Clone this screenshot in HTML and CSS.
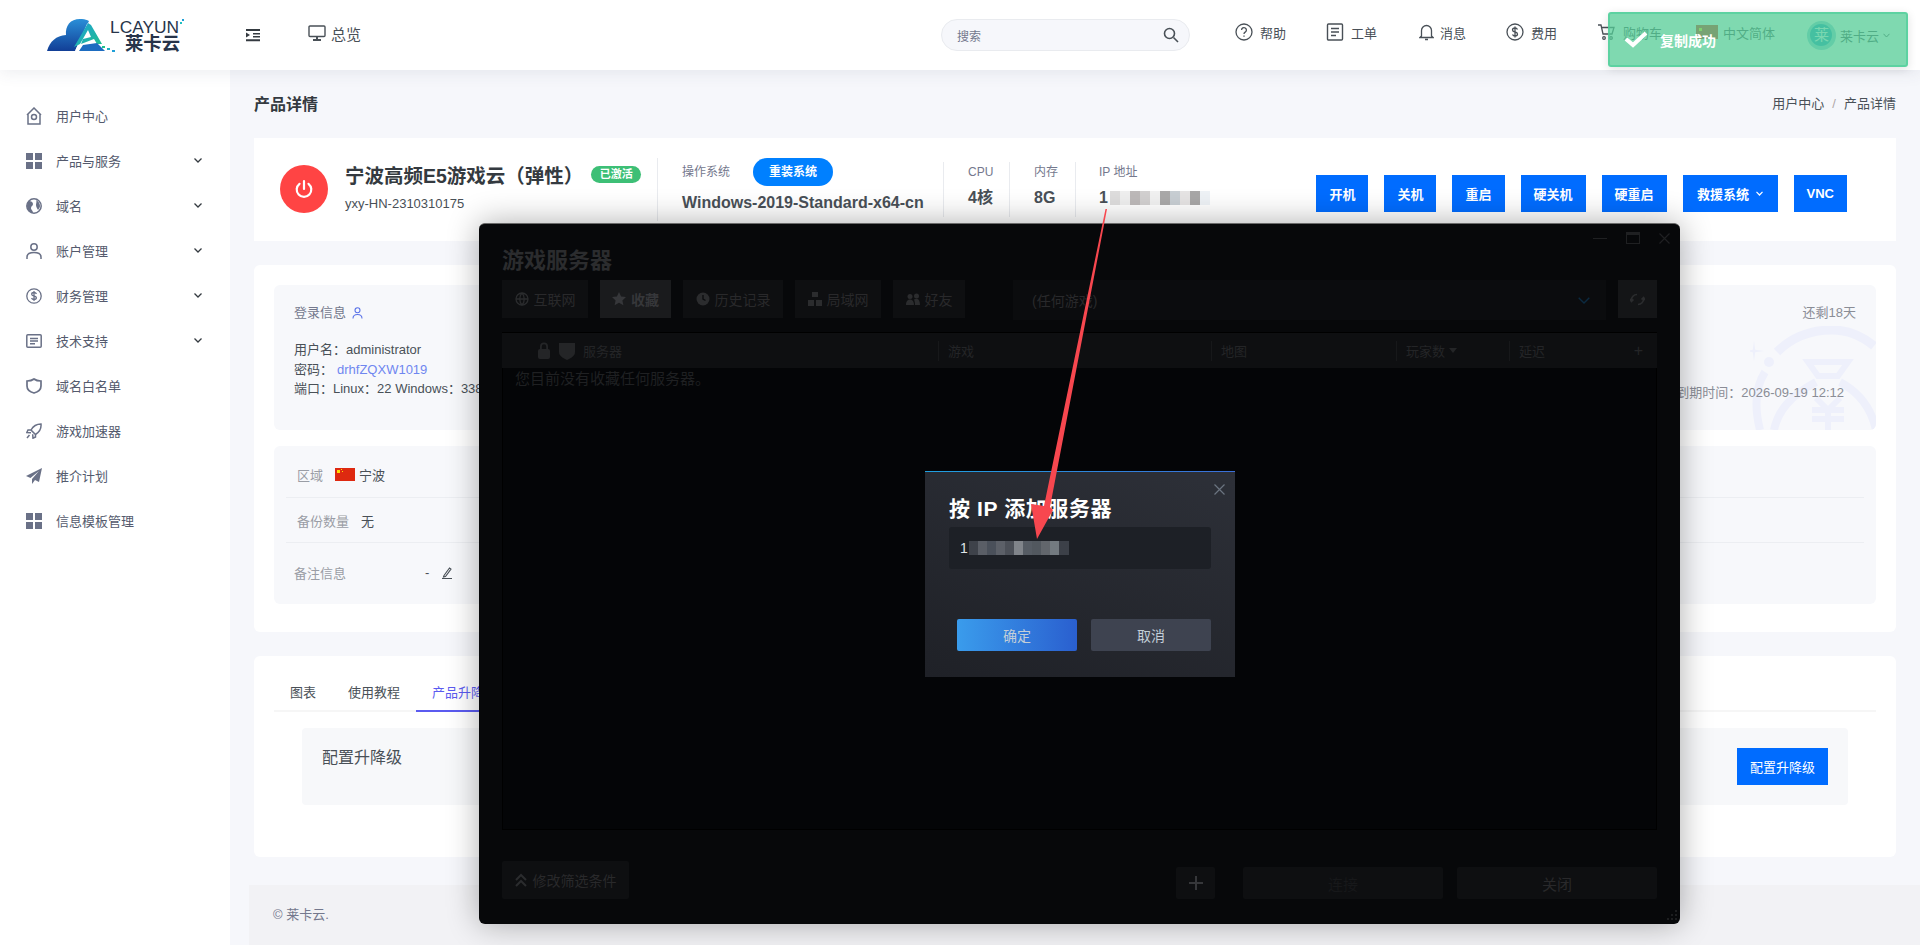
FILE: index.html
```html
<!DOCTYPE html>
<html lang="zh-CN">
<head>
    <meta charset="UTF-8">
    <meta name="viewport" content="width=device-width, initial-scale=1.0">
    <title>产品详情</title>
    <link rel="stylesheet" href="styles.css">
</head>
<body>

    <header class="topbar">
        <svg class="logo" width="137" height="36" viewBox="0 0 137 36">
            <defs>
                <linearGradient id="cloud" x1="0" y1="0" x2="0" y2="1"><stop offset="0" stop-color="#2a8fd8"/><stop offset="1" stop-color="#123e96"/></linearGradient>
                <linearGradient id="letterA" x1="0" y1="0" x2="1" y2="1"><stop offset="0" stop-color="#1fa0d8"/><stop offset="1" stop-color="#1fc08a"/></linearGradient>
            </defs>
            <path d="M0 34 C3 24 9 19 19 18 C18 8 24 1 35 2 C38 2 40 3 42 4 L28 34 Z" fill="url(#cloud)"/>
            <path d="M28 34 L40 7 C43 4 46 5 48 9 L60 34 L51 28 L44 14 L36 29 Z" fill="#fff"/>
            <path d="M27 30 L41 6 L44 8 L55 27 L50 27 L47 22 L34 27 L36 22 L44 20 L41 13 L33 27 Z" fill="url(#letterA)"/>
            <path d="M32 34 L58 34 L50 26 L36 28 Z" fill="#1d6cc0"/>
            <rect x="55" y="29" width="3" height="2" fill="#1fc08a"/><rect x="60" y="31" width="3" height="2" fill="#1fb0c0"/><rect x="65" y="33" width="3" height="2" fill="#1fa0d8"/>
            <rect x="133" y="5" width="2" height="2" fill="#1fc0c0"/><rect x="135" y="2" width="2" height="2" fill="#1fa0d8"/>
            <text class="logo-en" x="63" y="16" textLength="69" lengthAdjust="spacingAndGlyphs">LCAYUN</text>
            <text class="logo-cn" x="78" y="33" textLength="55" lengthAdjust="spacingAndGlyphs">莱卡云</text>
        </svg>
        <svg class="menu-toggle" width="14" height="14" viewBox="0 0 14 14"><path d="M0 1h14v2H0zM7 5h7v1.6H7zM7 8h7v1.6H7zM0 11.2h14v2H0zM0 4.4l4 2.6-4 2.6z" fill="#343a40"/></svg>
        <a class="overview">
            <svg width="18" height="18" viewBox="0 0 18 18" fill="none" stroke="#495057" stroke-width="1.4"><rect x="1" y="2" width="16" height="10.5" rx="1"/><path d="M9 12.5v3M5 16h8" stroke-width="2"/></svg>
            <span>总览</span>
        </a>

        <div class="search">
            <span>搜索</span>
            <svg width="16" height="16" viewBox="0 0 16 16" fill="none" stroke="#495057" stroke-width="1.6"><circle cx="6.5" cy="6.5" r="5"/><path d="M10.5 10.5L15 15"/></svg>
        </div>

        <a class="nav-item nav-help">
            <svg width="18" height="18" viewBox="0 0 18 18" fill="none" stroke="#495057" stroke-width="1.3"><circle cx="9" cy="9" r="8"/><path d="M6.6 7a2.4 2.4 0 1 1 3.6 2.1c-.8.5-1.2 1-1.2 1.9M9 12.4v1.4"/></svg>
            <span>帮助</span>
        </a>
        <a class="nav-item">
            <svg width="18" height="18" viewBox="0 0 18 18" fill="none" stroke="#495057" stroke-width="1.4"><rect x="1.5" y="1" width="15" height="16" rx="1"/><path d="M5 5.5h8M5 9h8M5 12.5h5"/></svg>
            <span>工单</span>
        </a>
        <a class="nav-item nav-bell">
            <svg width="15" height="18" viewBox="0 0 15 18" fill="none" stroke="#495057" stroke-width="1.3"><path d="M2.5 13V7.5a5 5 0 0 1 10 0V13l1.5 1.5H1zM6 16.5h3"/></svg>
            <span>消息</span>
        </a>
        <a class="nav-item">
            <svg width="18" height="18" viewBox="0 0 18 18" fill="none" stroke="#495057" stroke-width="1.3"><circle cx="9" cy="9" r="8"/><path d="M11.5 6.5C11 5.500 10 5 9 5c-1.500 0-2.500.8-2.500 2s1 1.700 2.500 2 2.500.8 2.500 2-1 2-2.500 2c-1 0-2-.5-2.500-1.500M9 3.500v11"/></svg>
            <span>费用</span>
        </a>
        <a class="nav-item">
            <svg width="19" height="18" viewBox="0 0 19 18" fill="none" stroke="#495057" stroke-width="1.3"><path d="M1 2h3l2 9h9l2-6.500H5"/><circle cx="7" cy="15" r="1.300"/><circle cx="14" cy="15" r="1.300"/></svg>
            <span>购物车</span>
        </a>
        <a class="nav-item nav-lang">
            <svg width="22" height="14" viewBox="0 0 22 14"><rect width="22" height="14" fill="#de2910"/><rect x="3" y="3" width="3" height="3" fill="#ffde00"/></svg>
            <span>中文简体</span>
        </a>
        <a class="nav-item nav-user">
            <span class="avatar"><span>莱</span></span>
            <span>莱卡云</span>
            <svg width="7" height="5" viewBox="0 0 7 5" fill="none" stroke="#495057"><path d="M.5.800L3.500 4 6.500.800"/></svg>
        </a>
    </header>

    <div class="page">
        <aside class="sidebar">
            <a class="side-item">
                <svg width="16" height="18" viewBox="0 0 16 18" fill="none" stroke="#6a7187" stroke-width="1.500"><path d="M1 8l7-7 7 7M2 7v10h12V7"/><circle cx="8" cy="10" r="2.500"/></svg>
                <span>用户中心</span>
            </a>
            <a class="side-item has-sub">
                <svg width="16" height="16" viewBox="0 0 16 16" fill="#6a7187"><rect width="7" height="7"/><rect x="9" width="7" height="7"/><rect y="9" width="7" height="7"/><rect x="9" y="9" width="7" height="7"/></svg>
                <span>产品与服务</span>
                <svg class="chevron" width="8" height="5" viewBox="0 0 8 5" fill="none" stroke="#343a40" stroke-width="1.300"><path d="M.5.500L4 4 7.500.500"/></svg>
            </a>
            <a class="side-item has-sub">
                <svg width="16" height="16" viewBox="0 0 16 16"><circle cx="8" cy="8" r="7.200" fill="none" stroke="#6a7187" stroke-width="1.500"/><path d="M3 3c2 0 4 1 4 3S5 8 5 10s2 2 2 5C3 14 1 11 1 8s1-4 2-5zM10 2c2 1 4 3 4 6 0 1-1 3-2 4-1-2-2-3-2-5s1-3 0-5z" fill="#6a7187"/></svg>
                <span>域名</span>
                <svg class="chevron" width="8" height="5" viewBox="0 0 8 5" fill="none" stroke="#343a40" stroke-width="1.300"><path d="M.5.500L4 4 7.500.500"/></svg>
            </a>
            <a class="side-item has-sub">
                <svg width="16" height="16" viewBox="0 0 16 16" fill="none" stroke="#6a7187" stroke-width="1.500"><circle cx="8" cy="4" r="3.200"/><path d="M1 16v-2c0-3 3-4.500 7-4.500s7 1.500 7 4.500v2"/></svg>
                <span>账户管理</span>
                <svg class="chevron" width="8" height="5" viewBox="0 0 8 5" fill="none" stroke="#343a40" stroke-width="1.300"><path d="M.5.500L4 4 7.500.500"/></svg>
            </a>
            <a class="side-item has-sub">
                <svg width="16" height="16" viewBox="0 0 16 16" fill="none" stroke="#6a7187" stroke-width="1.300"><circle cx="8" cy="8" r="7.200"/><path d="M10.500 5.800C10 5 9 4.500 8 4.500c-1.400 0-2.300.7-2.300 1.700S6.700 7.700 8 8s2.400.8 2.400 1.800S9.400 11.500 8 11.500c-1 0-2-.5-2.500-1.300M8 3v10"/></svg>
                <span>财务管理</span>
                <svg class="chevron" width="8" height="5" viewBox="0 0 8 5" fill="none" stroke="#343a40" stroke-width="1.300"><path d="M.5.500L4 4 7.500.500"/></svg>
            </a>
            <a class="side-item has-sub">
                <svg width="16" height="16" viewBox="0 0 16 16" fill="none" stroke="#6a7187" stroke-width="1.500"><rect x=".8" y="1.800" width="14.400" height="12.400" rx="1"/><path d="M4 5.500h8M4 8h8M4 10.800h5"/></svg>
                <span>技术支持</span>
                <svg class="chevron" width="8" height="5" viewBox="0 0 8 5" fill="none" stroke="#343a40" stroke-width="1.300"><path d="M.5.500L4 4 7.500.500"/></svg>
            </a>
            <a class="side-item">
                <svg width="16" height="16" viewBox="0 0 16 16" fill="none" stroke="#6a7187" stroke-width="1.700"><path d="M8 1c2 1.500 4 2 7 2v5c0 4-3 6-7 7-4-1-7-3-7-7V3c3 0 5-.5 7-2z"/></svg>
                <span>域名白名单</span>
            </a>
            <a class="side-item">
                <svg width="16" height="16" viewBox="0 0 16 16" fill="none" stroke="#6a7187" stroke-width="1.500"><path d="M15 1c.5 5-1.500 8-5.500 10.500L5 7c2.500-4.500 5.500-6 10-6zM5 7H2L.8 9.500 5 9.800M9.500 11.500V14l-2.500 1.200-.3-4M3.500 12L1 15"/></svg>
                <span>游戏加速器</span>
            </a>
            <a class="side-item">
                <svg width="16" height="16" viewBox="0 0 16 16"><path d="M16 0L0 8l4.500 2L13 3l-7 8v5l3-4 4 2z" fill="#6a7187"/></svg>
                <span>推介计划</span>
            </a>
            <a class="side-item">
                <svg width="16" height="16" viewBox="0 0 16 16" fill="#6a7187"><rect width="7" height="7"/><rect x="9" width="7" height="7"/><rect y="9" width="7" height="7"/><rect x="9" y="9" width="7" height="7"/></svg>
                <span>信息模板管理</span>
            </a>
        </aside>

        <main class="main">
            <div class="content">
                <div class="page-head">
                    <h4>产品详情</h4>
                    <div class="crumbs">用户中心<span class="crumb-sep">/</span>产品详情</div>
                </div>

                <section class="card summary">
                    <div class="power">
                        <svg width="20" height="20" viewBox="0 0 20 20" fill="none" stroke="#fff" stroke-width="2.200" stroke-linecap="round"><path d="M10 2v8M5.500 4.800a7.300 7.300 0 1 0 9 0"/></svg>
                    </div>
                    <div class="summary-name">
                        <div class="name-line"><strong>宁波高频E5游戏云（弹性）</strong><span class="badge">已激活</span></div>
                        <div class="name-code">yxy-HN-2310310175</div>
                    </div>
                    <div class="spec spec-os">
                        <div class="os-top"><span class="spec-label">操作系统</span><a class="pill">重装系统</a></div>
                        <div class="os-name">Windows-2019-Standard-x64-cn</div>
                    </div>
                    <div class="spec spec-small">
                        <div class="spec-label">CPU</div>
                        <div class="spec-value">4核</div>
                    </div>
                    <div class="spec spec-small">
                        <div class="spec-label">内存</div>
                        <div class="spec-value">8G</div>
                    </div>
                    <div class="spec spec-ip">
                        <div class="spec-label">IP 地址</div>
                        <div class="spec-value ip-value">1
                            <svg width="100" height="14" viewBox="0 0 100 14"><rect width="10" height="14" fill="#dedddd"/><rect x="10" width="10" height="14" fill="#efefef"/><rect x="20" width="10" height="14" fill="#bdb9b9"/><rect x="30" width="10" height="14" fill="#d2d0d0"/><rect x="40" width="10" height="14" fill="#f1f1f1"/><rect x="50" width="10" height="14" fill="#aaa9a9"/><rect x="60" width="10" height="14" fill="#c8ced3"/><rect x="70" width="10" height="14" fill="#e6e4e4"/><rect x="80" width="10" height="14" fill="#a8a7a7"/><rect x="90" width="10" height="14" fill="#eef2f6"/></svg>
                        </div>
                    </div>
                    <div class="actions">
                        <a class="btn">开机</a>
                        <a class="btn">关机</a>
                        <a class="btn">重启</a>
                        <a class="btn">硬关机</a>
                        <a class="btn">硬重启</a>
                        <a class="btn btn-rescue">救援系统<svg width="7" height="5" viewBox="0 0 7 5" fill="none" stroke="#fff" stroke-width="1.200"><path d="M.5.800L3.500 4 6.500.800"/></svg></a>
                        <a class="btn">VNC</a>
                    </div>
                </section>

                <section class="card detail">
                    <div class="panel login-panel">
                        <svg class="watermark" width="126" height="104" viewBox="0 0 126 104" fill="none" stroke="#eef0fb" stroke-width="9">
                            <path d="M27 26C45 8 65 4 82 4c16 0 30 6 42 16"/>
                            <path d="M10 104C4 80 6 60 15 46" stroke-width="8"/>
                            <circle cx="19" cy="36" r="5" fill="#eef0fb" stroke="none"/>
                            <path d="M3 15l1.200 8.800L13 25l-8.800 1.200L3 35l-1.200-8.800L-7 25l8.800-1.200z" transform="translate(1 0)" fill="#eef0fb" stroke="none"/>
                            <path d="M58 36h40l-10 14H68z" stroke-width="6"/>
                            <path d="M66 56C40 70 28 85 24 104M90 56c22 12 32 29 36 48" stroke-width="8"/>
                            <path d="M66 72l12 12 12-12M62 84h32M62 93h32M78 84v20" stroke-width="6"/>
                        </svg>
                        <div class="login-info">
                            <div class="login-title">登录信息
                                <svg width="11" height="12" viewBox="0 0 11 12" fill="none" stroke="#5b73e8" stroke-width="1.100"><circle cx="5.500" cy="3.300" r="2.500"/><path d="M1 11.500c0-3 2-4 4.500-4s4.500 1 4.500 4"/></svg>
                            </div>
                            <div class="login-lines">
                                <div>用户名：administrator</div>
                                <div>密码：<a class="pwd">drhfZQXW1019</a></div>
                                <div class="nowrap">端口：Linux：22 Windows：3389</div>
                            </div>
                        </div>
                        <div class="expire">
                            <div>还剩18天</div>
                            <div class="expire-date">到期时间：2026-09-19 12:12</div>
                        </div>
                    </div>

                    <div class="panel info-panel">
                        <div class="info-row row-area">
                            <span class="info-label">区域</span>
                            <svg class="flag" width="20" height="13" viewBox="0 0 20 13"><rect width="20" height="13" fill="#de2910"/><rect x="2" y="2" width="3" height="3" fill="#ffde00"/><rect x="6" y="1" width="1" height="1" fill="#ffde00"/><rect x="7" y="3" width="1" height="1" fill="#ffde00"/></svg>
                            <span>宁波</span>
                        </div>
                        <div class="info-row">
                            <span class="info-label">备份数量</span>
                            <span class="info-val">无</span>
                        </div>
                        <div class="info-row row-note">
                            <span class="info-label">备注信息</span>
                            <span class="note-val">-</span>
                            <svg width="10" height="12" viewBox="0 0 10 12" fill="none" stroke="#495057" stroke-width="1.100"><path d="M2 8.500L7.500 1 9 2.200 3.500 9.500 1.500 10zM0 11.500h10"/></svg>
                        </div>
                    </div>
                </section>

                <section class="card upgrade">
                    <div class="tabs">
                        <a class="tab">图表</a>
                        <a class="tab">使用教程</a>
                        <a class="tab tab-active">产品升降级</a>
                    </div>
                    <div class="upgrade-box">
                        <div class="upgrade-title">配置升降级</div>
                        <a class="btn btn-upgrade">配置升降级</a>
                    </div>
                </section>
            </div>
            <footer class="footer">© 莱卡云.</footer>
        </main>
    </div>

    <div class="game-win">
        <div class="win-controls">
            <span class="win-min"></span>
            <span class="win-max"></span>
            <svg width="11" height="11" viewBox="0 0 11 11" stroke="#1f2022" stroke-width="1.200"><path d="M.5.500l10 10M10.500.500l-10 10"/></svg>
        </div>
        <div class="win-title">游戏服务器</div>
        <div class="win-tabs">
            <a class="win-tab"><svg width="14" height="14" viewBox="0 0 14 14" fill="none" stroke="#2b2c2e" stroke-width="1.300"><circle cx="7" cy="7" r="6"/><path d="M1 7h12M7 1c-3 3-3 9 0 12M7 1c3 3 3 9 0 12"/></svg>互联网</a>
            <a class="win-tab win-tab-on"><svg width="14" height="14" viewBox="0 0 14 14" fill="#36373a"><path d="M7 0l2.100 4.500 4.900.6-3.600 3.300 1 4.800L7 10.800 2.600 13.200l1-4.800L0 5.100l4.900-.6z"/></svg>收藏</a>
            <a class="win-tab"><svg width="14" height="14" viewBox="0 0 14 14"><circle cx="7" cy="7" r="6.500" fill="#2b2c2e"/><path d="M7 3v4l2.500 1.500" fill="none" stroke="#0d0e10" stroke-width="1.400"/></svg>历史记录</a>
            <a class="win-tab"><svg width="14" height="14" viewBox="0 0 14 14" fill="#2b2c2e"><rect x="4" y="0" width="6" height="5"/><rect x="0" y="8" width="6" height="6"/><rect x="8" y="8" width="6" height="6"/></svg>局域网</a>
            <a class="win-tab"><svg width="14" height="14" viewBox="0 0 14 14" fill="#2b2c2e"><circle cx="4" cy="4.500" r="2.500"/><circle cx="10.500" cy="4" r="2.500"/><path d="M0 13c0-4 2-5.500 4-5.500S8 9 8 13zM9 13c0-3-.5-4-1-5.500 1-.5 1.500-.7 2.500-.7 2 0 3.500 2 3.500 6.200z"/></svg>好友</a>
            <div class="win-select">
                <span>(任何游戏)</span>
                <svg width="12" height="7" viewBox="0 0 12 7" fill="none" stroke="#0b2a40" stroke-width="1.400"><path d="M.7.700L6 6 11.300.7"/></svg>
            </div>
            <a class="win-refresh"><svg width="15" height="13" viewBox="0 0 15 13" fill="none" stroke="#2b2c2e" stroke-width="1.700"><path d="M1.500 8C1 4 4 1.500 7 1.500M13.500 5C14 9 11 11.500 8 11.500M0 6l1.500 2.500L3.500 6.500M15 7l-1.500-2.500L11.500 6.500"/></svg></a>
        </div>
        <div class="win-table">
            <div class="win-thead">
                <div class="col col-server">
                    <svg width="14" height="17" viewBox="0 0 14 17" fill="#242527"><path d="M3 7V4.500a4 4 0 0 1 8 0V7h-1.800V4.500a2.200 2.200 0 0 0-4.400 0V7z"/><rect x="1" y="7" width="12" height="10" rx="2"/></svg>
                    <svg width="16" height="18" viewBox="0 0 16 18" fill="#242527"><path d="M0 1h16v9c0 4-4 6-8 8-4-2-8-4-8-8z"/></svg>
                    <span>服务器</span>
                </div>
                <div class="col col-game">游戏</div>
                <div class="col col-map">地图</div>
                <div class="col col-players">玩家数<svg width="8" height="5" viewBox="0 0 8 5" fill="#242527"><path d="M0 0h8L4 5z"/></svg></div>
                <div class="col col-ping">延迟<span class="col-plus">+</span></div>
            </div>
            <div class="win-tbody">您目前没有收藏任何服务器。</div>
        </div>
        <div class="win-bottom">
            <a class="win-btn win-filter"><svg width="12" height="14" viewBox="0 0 12 14" fill="none" stroke="#2b2c2e" stroke-width="2"><path d="M1 7l5-5 5 5M1 13l5-5 5 5"/></svg>修改筛选条件</a>
            <a class="win-btn win-plus"><svg width="14" height="14" viewBox="0 0 14 14" stroke="#36373a" stroke-width="2"><path d="M7 0v14M0 7h14"/></svg></a>
            <a class="win-btn win-connect">连接</a>
            <a class="win-btn win-close">关闭</a>
        </div>
        <svg class="win-grip" width="12" height="12" viewBox="0 0 12 12" fill="#1d1e20"><rect x="9" y="0" width="2" height="2"/><rect x="5" y="4" width="2" height="2"/><rect x="9" y="4" width="2" height="2"/><rect x="1" y="8" width="2" height="2"/><rect x="5" y="8" width="2" height="2"/><rect x="9" y="8" width="2" height="2"/></svg>
    </div>

    <div class="ip-dialog">
        <svg class="ip-close" width="11" height="11" viewBox="0 0 11 11" stroke="#6b7480" stroke-width="1.200"><path d="M.5.500l10 10M10.500.500l-10 10"/></svg>
        <div class="ip-title">按 IP 添加服务器</div>
        <div class="ip-input">1
            <svg width="100" height="14" viewBox="0 0 100 14"><rect width="9" height="14" fill="#3e424a"/><rect x="9" width="9" height="14" fill="#5a5e66"/><rect x="18" width="9" height="14" fill="#4a505a"/><rect x="27" width="9" height="14" fill="#5c6068"/><rect x="36" width="9" height="14" fill="#4c5058"/><rect x="45" width="9" height="14" fill="#80848a"/><rect x="54" width="9" height="14" fill="#565c64"/><rect x="63" width="9" height="14" fill="#52585f"/><rect x="72" width="9" height="14" fill="#62666c"/><rect x="81" width="9" height="14" fill="#737a80"/><rect x="90" width="10" height="14" fill="#3c4048"/></svg>
        </div>
        <div class="ip-buttons">
            <a class="ip-btn ip-ok">确定</a>
            <a class="ip-btn ip-cancel">取消</a>
        </div>
    </div>

    <svg class="arrow" width="1920" height="945" viewBox="0 0 1920 945"><polygon points="1105.500,209 1107,209 1050,507 1053,510 1037,539 1031,504 1044,506" fill="#f7474f"/></svg>

    <div class="toast">
        <svg width="24" height="17" viewBox="0 0 24 17" fill="none" stroke="#fff" stroke-width="4"><path d="M2 8l7 6L22 2"/></svg>
        <span>复制成功</span>
    </div>

</body>
</html>
```

FILE: styles.css
```css
* {
    box-sizing: border-box;
}

html, body {
    margin: 0;
    height: 945px;
    overflow: hidden;
}

body {
    position: relative;
    font-family: "Liberation Sans", "Noto Sans CJK SC", sans-serif;
    font-size: 13px;
    color: #495057;
    background-color: #f6f7fb;
}

/* top bar */

.topbar {
    position: relative;
    z-index: 2;
    display: flex;
    align-items: center;
    height: 70px;
    padding-left: 47px;
    background-color: #fff;
    box-shadow: 0 2px 16px rgba(60, 70, 100, 0.1);
}

.logo {
    flex: none;
}

.logo-en {
    font-size: 16px;
    fill: #27344a;
}

.logo-cn {
    font-size: 18px;
    font-weight: bold;
    fill: #27344a;
}

.menu-toggle {
    margin-left: 62px;
}

.overview {
    display: flex;
    align-items: center;
    gap: 5px;
    margin-left: 48px;
    font-size: 15px;
    padding-bottom: 4px;
}

.search {
    display: flex;
    align-items: center;
    justify-content: space-between;
    width: 249px;
    height: 32px;
    margin-left: auto;
    padding: 0 10px 0 15px;
    font-size: 12px;
    color: #74788d;
    background-color: #f6f7fb;
    border: 1px solid #e9ebef;
    border-radius: 16px;
}

.nav-item {
    display: flex;
    align-items: center;
    gap: 7px;
    margin-left: 40px;
    padding-bottom: 6px;
    font-size: 13px;
}

.nav-help {
    margin-left: 45px;
}

.nav-bell {
    margin-left: 42px;
    gap: 6px;
}

.nav-lang {
    margin-left: 34px;
    gap: 5px;
}

.nav-user {
    margin-left: 32px;
    margin-right: 30px;
    gap: 4px;
    padding-bottom: 0;
}

.avatar {
    display: flex;
    align-items: center;
    justify-content: center;
    width: 29px;
    height: 29px;
    border-radius: 50%;
    background-color: #8fd0dc;
}

.avatar span {
    display: block;
    width: 22px;
    height: 22px;
    line-height: 22px;
    text-align: center;
    font-size: 15px;
    color: #e8f8ff;
    border-radius: 50%;
    background-color: #1b9cc4;
}

/* sidebar */

.page {
    display: flex;
    height: 875px;
}

.sidebar {
    flex: none;
    width: 230px;
    padding-top: 23px;
    background-color: #fff;
}

.side-item {
    display: flex;
    align-items: center;
    height: 45px;
    padding-left: 26px;
    color: #545a6d;
}

.side-item > span {
    margin-left: 14px;
}

.chevron {
    margin-left: auto;
    margin-right: 28px;
}

/* main */

.main {
    flex: 1;
    display: flex;
    flex-direction: column;
    min-width: 0;
}

.content {
    height: 815px;
    padding: 0 24px;
}

.page-head {
    display: flex;
    justify-content: space-between;
    align-items: center;
    height: 68px;
    padding-bottom: 3px;
}

.page-head h4 {
    margin: 0;
    font-size: 16px;
    font-weight: bold;
    color: #343a40;
}

.crumbs {
    color: #495057;
}

.crumb-sep {
    margin: 0 8px;
    color: #b0a8a8;
}

.card {
    background-color: #fff;
    margin-bottom: 24px;
}

.summary {
    display: flex;
    align-items: center;
    height: 103px;
    padding-left: 26px;
}

.power {
    flex: none;
    display: flex;
    align-items: center;
    justify-content: center;
    width: 48px;
    height: 48px;
    margin-bottom: 2px;
    background-color: #ff4444;
    border-radius: 50%;
}

.summary-name {
    flex: none;
    width: 312px;
    margin-left: 17px;
    padding-bottom: 4px;
}

.name-line {
    display: flex;
    align-items: center;
    height: 26px;
}

.name-line strong {
    font-size: 19.5px;
    color: #343a40;
    white-space: nowrap;
}

.badge {
    margin-left: 8px;
    width: 50px;
    height: 17px;
    line-height: 17px;
    text-align: center;
    font-size: 11px;
    font-weight: bold;
    color: #fff;
    background-color: #3dbf76;
    border-radius: 9px;
}

.name-code {
    margin-top: 6px;
    line-height: 20px;
    color: #495057;
}

.spec {
    flex: none;
    height: 55px;
    padding-left: 24px;
    border-left: 1px solid #e9ebef;
}

.spec-os {
    width: 286px;
    height: 63px;
}

.spec-small {
    width: 66px;
}

.spec-ip {
    width: 160px;
    padding-left: 23px;
}

.spec-label {
    line-height: 20px;
    font-size: 12px;
    color: #74788d;
}

.os-top {
    display: flex;
    align-items: center;
    justify-content: space-between;
    width: 151px;
}

.pill {
    width: 80px;
    height: 28px;
    line-height: 28px;
    text-align: center;
    font-size: 12px;
    font-weight: bold;
    color: #fff;
    background-color: #0080ff;
    border-radius: 14px;
}

.os-name {
    margin-top: 3px;
    line-height: 28px;
    font-size: 16px;
    font-weight: bold;
    color: #495057;
    white-space: nowrap;
}

.spec-value {
    margin-top: 6px;
    line-height: 20px;
    font-size: 16px;
    font-weight: bold;
    color: #495057;
}

.ip-value {
    display: flex;
    align-items: center;
    gap: 2px;
}

.actions {
    display: flex;
    gap: 16px;
    margin-top: 8px;
    margin-left: auto;
    padding-right: 49px;
}

.btn {
    display: flex;
    align-items: center;
    justify-content: center;
    gap: 7px;
    height: 37px;
    padding: 0 13px;
    font-size: 13px;
    font-weight: bold;
    color: #fff;
    white-space: nowrap;
    background-color: #006cff;
}

.btn-rescue {
    padding: 0 14.5px;
}

.detail {
    height: 367px;
    padding: 20px;
    border-radius: 6px;
}

.panel {
    background-color: #f7f8fb;
    border-radius: 6px;
}

.login-panel {
    position: relative;
    display: flex;
    justify-content: space-between;
    height: 145px;
    padding: 18px 20px 0;
    overflow: hidden;
    margin-bottom: 16px;
}

.watermark {
    position: absolute;
    right: 0;
    bottom: 0;
}

.login-info, .expire {
    position: relative;
}

.login-title {
    display: flex;
    align-items: center;
    gap: 6px;
    line-height: 20px;
    color: #74788d;
}

.login-lines {
    margin-top: 17px;
    line-height: 19.5px;
    color: #495057;
}

.pwd {
    margin-left: 4px;
    color: #6f86f0;
}

.nowrap {
    white-space: nowrap;
}

.expire {
    text-align: right;
    line-height: 20px;
    color: #8a8d96;
}

.expire-date {
    margin-top: 60px;
    margin-right: 12px;
}

.info-panel {
    height: 158px;
    padding: 0 12px;
}

.info-row {
    display: flex;
    align-items: center;
    height: 45px;
    padding-left: 11px;
    border-bottom: 1px solid #eceef2;
}

.row-area {
    height: 52px;
    padding-top: 6px;
}

.row-note {
    height: 61px;
    padding-left: 8px;
    padding-bottom: 2px;
    border-bottom: none;
}

.info-label {
    color: #9a9da5;
}

.flag {
    margin-left: 12px;
    margin-right: 4px;
}

.info-val {
    margin-left: 12px;
}

.note-val {
    margin-left: 79px;
    margin-right: 13px;
}

.upgrade {
    height: 201px;
    margin-bottom: 0;
    padding-top: 20px;
    border-radius: 6px;
}

.tabs {
    display: flex;
    height: 36px;
    margin: 0 20px;
    border-bottom: 2px solid #f6f6f6;
}

.tab {
    height: 36px;
    line-height: 34px;
    padding: 0 16px;
    border-bottom: 2px solid transparent;
}

.tab-active {
    color: #5b5bf0;
    border-bottom-color: #5b5bf0;
}

.upgrade-box {
    display: flex;
    justify-content: space-between;
    align-items: flex-start;
    height: 77px;
    margin: 16px 48px 0;
    padding: 0 20px;
    background-color: #f7f8fa;
    border-radius: 4px;
}

.upgrade-title {
    margin-top: 18px;
    line-height: 24px;
    font-size: 16px;
    color: #495057;
}

.btn-upgrade {
    margin-top: 20px;
    width: 91px;
    padding: 0;
    font-size: 13px;
    font-weight: normal;
}

.footer {
    height: 60px;
    margin-left: 19px;
    padding-left: 24px;
    line-height: 60px;
    color: #74788d;
    background-color: #f2f2f5;
}

/* steam window */

.game-win {
    position: absolute;
    z-index: 3;
    left: 479px;
    top: 223px;
    display: flex;
    flex-direction: column;
    width: 1201px;
    height: 701px;
    padding: 22px 23px 0;
    color: #29292b;
    background-color: #07080a;
    border-radius: 6px;
    border-top: 1px solid #6a6a6a;
    box-shadow: 0 0 32px rgba(0, 0, 0, 0.32);
}

.win-controls {
    position: absolute;
    top: 8px;
    right: 10px;
    display: flex;
    align-items: center;
    gap: 19px;
}

.win-min {
    width: 14px;
    height: 1px;
    background-color: #1f2022;
}

.win-max {
    width: 14px;
    height: 12px;
    border: 1px solid #1f2022;
    border-top-width: 3px;
}

.win-title {
    line-height: 30px;
    font-size: 22px;
    font-weight: bold;
    color: #2b2c2e;
}

.win-tabs {
    display: flex;
    gap: 12px;
    margin-top: 4px;
}

.win-tab {
    display: flex;
    align-items: center;
    gap: 5px;
    height: 38px;
    padding: 0 12.5px;
    font-size: 14px;
    white-space: nowrap;
    background-color: #0e0f11;
}

.win-tab-on {
    padding: 0 12px;
    font-weight: bold;
    color: #36373a;
    background-color: #1a1b1d;
}

.win-select {
    display: flex;
    align-items: center;
    justify-content: space-between;
    width: 593px;
    height: 40px;
    margin-left: 36px;
    padding: 0 16px 0 19px;
    font-size: 14px;
    background-color: #0b0c0e;
}

.win-refresh {
    display: flex;
    align-items: center;
    justify-content: center;
    width: 39px;
    height: 38px;
    background-color: #141517;
}

.win-table {
    height: 498px;
    margin-top: 12px;
}

.win-thead {
    display: flex;
    align-items: center;
    height: 36px;
    font-size: 13px;
    color: #242527;
    background-color: #0e0f11;
    border-top: 1px solid #000;
}

.col {
    display: flex;
    align-items: center;
    height: 20px;
    padding-left: 9px;
    border-left: 1px solid #17181a;
}

.col-server {
    width: 436px;
    padding-left: 35px;
    gap: 8px;
    border-left: none;
}

.col-game {
    width: 273px;
}

.col-map {
    width: 185px;
}

.col-players {
    width: 113px;
    gap: 4px;
}

.col-ping {
    flex: 1;
    justify-content: space-between;
    padding-right: 14px;
}

.col-plus {
    font-size: 16px;
}

.win-tbody {
    height: 462px;
    padding: 1px 12px;
    font-size: 15px;
    line-height: 20px;
    color: #1f2022;
    background-color: #040507;
    border: 1px solid #000;
    border-top: none;
}

.win-bottom {
    display: flex;
    align-items: flex-end;
    margin-top: 31px;
}

.win-btn {
    display: flex;
    align-items: center;
    justify-content: center;
    height: 32px;
    background-color: #0e0f11;
    border-radius: 2px;
}

.win-filter {
    gap: 6px;
    width: 127px;
    height: 38px;
    font-size: 14px;
}

.win-plus {
    width: 39px;
    margin-left: auto;
}

.win-connect {
    width: 200px;
    margin-left: 28px;
    font-size: 15px;
    color: #17181a;
}

.win-close {
    width: 200px;
    margin-left: 14px;
    font-size: 15px;
}

.win-grip {
    position: absolute;
    right: 2px;
    bottom: 2px;
}

/* add by ip dialog */

.ip-dialog {
    position: absolute;
    z-index: 4;
    left: 925px;
    top: 471px;
    width: 310px;
    height: 206px;
    padding: 23px 0 0 24px;
    background: linear-gradient(200deg, #2d3038, #1f2127);
    border-top: 1px solid;
    border-image: linear-gradient(90deg, #1fa0e0, #3b6fd8) 1;
}

.ip-close {
    position: absolute;
    top: 12px;
    right: 10px;
}

.ip-title {
    line-height: 28px;
    font-size: 21px;
    font-weight: bold;
    color: #fff;
    letter-spacing: 0.6px;
    white-space: nowrap;
}

.ip-input {
    display: flex;
    align-items: center;
    gap: 1px;
    width: 262px;
    height: 42px;
    margin-top: 4px;
    padding-left: 11px;
    font-size: 14px;
    color: #dfe3e8;
    background-color: #1d2026;
    border-radius: 3px;
}

.ip-buttons {
    display: flex;
    gap: 14px;
    margin: 50px 0 0 8px;
}

.ip-btn {
    display: flex;
    align-items: center;
    justify-content: center;
    width: 120px;
    height: 32px;
    font-size: 14px;
    color: #c3ced8;
    border-radius: 2px;
}

.ip-ok {
    background: linear-gradient(90deg, #3a9cec, #2a5fcf);
}

.ip-cancel {
    background-color: #3e4350;
}

.arrow {
    position: absolute;
    z-index: 5;
    left: 0;
    top: 0;
    pointer-events: none;
}

.toast {
    position: absolute;
    z-index: 6;
    top: 12px;
    right: 12px;
    display: flex;
    align-items: center;
    gap: 12px;
    width: 300px;
    height: 55px;
    padding: 0 0 0 14px;
    font-size: 14px;
    font-weight: bold;
    color: #fff;
    background-color: rgba(84, 204, 150, 0.75);
    border: 2px solid rgba(70, 205, 150, 0.6);
    border-radius: 3px;
    box-shadow: 0 2px 10px rgba(0, 0, 0, 0.12);
}
```
